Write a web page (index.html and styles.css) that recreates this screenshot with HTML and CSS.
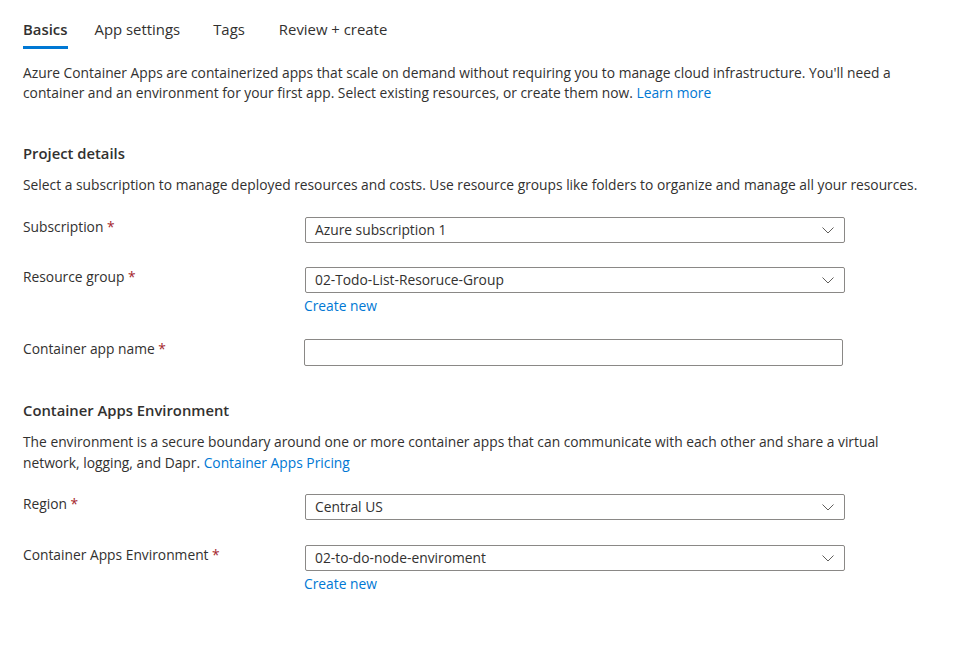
FILE: index.html
```html
<!DOCTYPE html>
<html lang="en">
<head>
<meta charset="utf-8">
<title>Create Container App</title>
<link rel="stylesheet" href="styles.css">
</head>
<body>
<div class="page">
  <nav class="tabs">
    <div class="tab active t1">Basics</div>
    <div class="tab t2">App settings</div>
    <div class="tab t3">Tags</div>
    <div class="tab">Review + create</div>
  </nav>

  <p class="intro">Azure Container Apps are containerized apps that scale on demand without requiring you to manage cloud infrastructure. You'll need a container and an environment for your first app. Select existing resources, or create them now. <a class="link" href="#">Learn more</a></p>

  <section class="section first">
    <h2 class="heading">Project details</h2>
    <p class="desc">Select a subscription to manage deployed resources and costs. Use resource groups like folders to organize and manage all your resources.</p>

    <div class="row">
      <div class="label">Subscription <span class="req">*</span></div>
      <div class="field">
        <div class="select"><span>Azure subscription 1</span><svg class="chev" width="12" height="7" viewBox="0 0 12 7"><path d="M0.5 0.5 L6 6 L11.5 0.5" fill="none" stroke="#605e5c" stroke-width="1"/></svg></div>
      </div>
    </div>

    <div class="row">
      <div class="label">Resource group <span class="req">*</span></div>
      <div class="field">
        <div class="select"><span>02-Todo-List-Resoruce-Group</span><svg class="chev" width="12" height="7" viewBox="0 0 12 7"><path d="M0.5 0.5 L6 6 L11.5 0.5" fill="none" stroke="#605e5c" stroke-width="1"/></svg></div>
        <a class="link create" href="#">Create new</a>
      </div>
    </div>

    <div class="row after-link">
      <div class="label">Container app name <span class="req">*</span></div>
      <div class="field">
        <div class="input"></div>
      </div>
    </div>
  </section>

  <section class="section second">
    <h2 class="heading">Container Apps Environment</h2>
    <p class="desc">The environment is a secure boundary around one or more container apps that can communicate with each other and share a virtual network, logging, and Dapr. <a class="link" href="#">Container Apps Pricing</a></p>

    <div class="row">
      <div class="label">Region <span class="req">*</span></div>
      <div class="field">
        <div class="select"><span>Central US</span><svg class="chev" width="12" height="7" viewBox="0 0 12 7"><path d="M0.5 0.5 L6 6 L11.5 0.5" fill="none" stroke="#605e5c" stroke-width="1"/></svg></div>
      </div>
    </div>

    <div class="row">
      <div class="label">Container Apps Environment <span class="req">*</span></div>
      <div class="field">
        <div class="select"><span>02-to-do-node-enviroment</span><svg class="chev" width="12" height="7" viewBox="0 0 12 7"><path d="M0.5 0.5 L6 6 L11.5 0.5" fill="none" stroke="#605e5c" stroke-width="1"/></svg></div>
        <a class="link create" href="#">Create new</a>
      </div>
    </div>
  </section>
</div>
</body>
</html>
```

FILE: styles.css
```css
html, body {
  margin: 0;
  padding: 0;
  background: #ffffff;
}
body {
  font-family: "Open Sans", "Noto Sans", "Liberation Sans", sans-serif;
  font-size: 13.8px;
  color: #323130;
  line-height: 20px;
}
.page {
  padding: 0 0 0 23px;
  width: 934px;
}
.tabs {
  display: flex;
  padding-top: 19px;
}
.tab {
  font-size: 14.9px;
  line-height: 20px;
  padding-bottom: 7px;
  border-bottom: 3px solid transparent;
  color: #323130;
}
.tab.t1 {
  margin-right: 27px;
}
.tab.t2 {
  margin-right: 33px;
}
.tab.t3 {
  margin-right: 34px;
}
.tab.active {
  font-weight: 600;
  border-bottom-color: #0078d4;
}
.intro {
  margin: 14px 0 0 0;
  width: 900px;
}
.link {
  color: #0078d4;
  text-decoration: none;
}
.section.first {
  margin-top: 40px;
}
.section.second {
  margin-top: 34px;
}
.heading {
  margin: 0;
  font-size: 14.8px;
  font-weight: 600;
  line-height: 20px;
}
.desc {
  margin: 12px 0 0 0;
  width: 905px;
}
.second .desc {
  margin-top: 11px;
  line-height: 21px;
}
.row {
  display: flex;
  align-items: flex-start;
  margin-top: 22px;
}
.row + .row {
  margin-top: 24px;
}
.row.after-link {
  margin-top: 23px;
}
.second .row {
  margin-top: 21px;
}
.second .row + .row {
  margin-top: 25px;
}
.label {
  width: 282px;
  flex: none;
  line-height: 20px;
}
.req {
  color: #a4262c;
}
.field {
  display: flex;
  flex-direction: column;
  align-items: flex-start;
}
.select, .input {
  box-sizing: border-box;
  width: 540px;
  height: 26px;
  border: 1px solid #8a8886;
  border-radius: 2px;
  display: flex;
  align-items: center;
  justify-content: space-between;
  padding: 0 10px 0 9px;
}
.input {
  width: 539px;
  height: 27px;
  margin-left: -1px;
}
.chev {
  display: block;
}
.create {
  margin-top: 3px;
  margin-left: -1px;
  line-height: 20px;
}
```
